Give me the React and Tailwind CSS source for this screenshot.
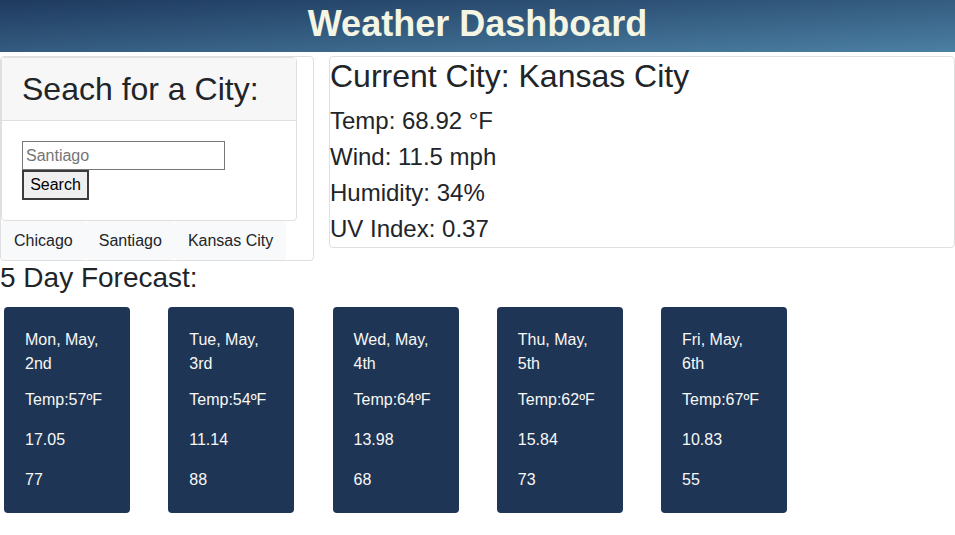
import React from "react";

const days = [
  { date: "Mon, May, 2nd", temp: "57", wind: "17.05", hum: "77" },
  { date: "Tue, May, 3rd", temp: "54", wind: "11.14", hum: "88" },
  { date: "Wed, May, 4th", temp: "64", wind: "13.98", hum: "68" },
  { date: "Thu, May, 5th", temp: "62", wind: "15.84", hum: "73" },
  { date: "Fri, May, 6th", temp: "67", wind: "10.83", hum: "55" },
];

export default function App() {
  return (
    <div
      className="min-h-[535px] bg-white text-[#212529]"
      style={{ fontFamily: '"Liberation Sans", Arial, sans-serif' }}
    >
      <header className="h-[52px] bg-linear-to-br from-[#1f3a5f] to-[#4b80a3] text-center">
        <h1 className="pt-[3px] text-[36px] font-bold leading-[41px] text-[#f4f5e2]">
          Weather Dashboard
        </h1>
      </header>

      <div className="mt-[4px] flex items-start gap-[15px]">
        <div className="w-[314px] shrink-0 rounded-[4px] border border-[#dfdfdf]">
          <div className="w-[296px] rounded-[4px] border border-[#dfdfdf]">
            <div className="border-b border-[#dfdfdf] bg-[#f7f7f7] px-[20px] py-[12px]">
              <h2 className="text-[32px] leading-[38.4px]">Seach for a City:</h2>
            </div>
            <div className="p-[20px]">
              <input
                className="block h-[29px] w-[203px] border border-[#767676] px-[3px] text-[16px] text-black placeholder:text-[#757575] outline-none"
                placeholder="Santiago"
              />
              <button className="block h-[30px] w-[67px] border-2 border-[#3b3b3b] bg-[#efefef] text-[16px] text-black">
                Search
              </button>
            </div>
          </div>
          <div className="flex">
            {["Chicago", "Santiago", "Kansas City"].map((c) => (
              <button
                key={c}
                className="h-[39px] rounded-[4px] border border-[#f8f9fa] bg-[#f8f9fa] px-[12px] text-[16px] leading-[24px] text-[#212529]"
              >
                {c}
              </button>
            ))}
          </div>
        </div>

        <div className="flex-1 rounded-[4px] border border-[#dfdfdf]">
          <h2 className="mb-[8px] text-[32px] leading-[38.4px]">Current City: Kansas City</h2>
          <p className="text-[24px] leading-[36px]">Temp: 68.92 °F</p>
          <p className="text-[24px] leading-[36px]">Wind: 11.5 mph</p>
          <p className="text-[24px] leading-[36px]">Humidity: 34%</p>
          <p className="text-[24px] leading-[36px]">UV Index: 0.37</p>
        </div>
      </div>

      <h3 className="text-[28px] leading-[33.6px]">5 Day Forecast:</h3>

      <div className="mt-[12px] flex gap-[38.25px] pl-[4px]">
        {days.map((d) => (
          <div
            key={d.date}
            className="w-[126px] rounded-[4px] bg-[#1f3556] px-[21px] pb-[21px] pt-[21px] text-[16px] leading-[24px] text-[#f8f8f4]"
          >
            <p>{d.date}</p>
            <p className="mt-[12px]">Temp:{d.temp}ºF</p>
            <p className="mt-[16px]">{d.wind}</p>
            <p className="mt-[16px]">{d.hum}</p>
          </div>
        ))}
      </div>
    </div>
  );
}
